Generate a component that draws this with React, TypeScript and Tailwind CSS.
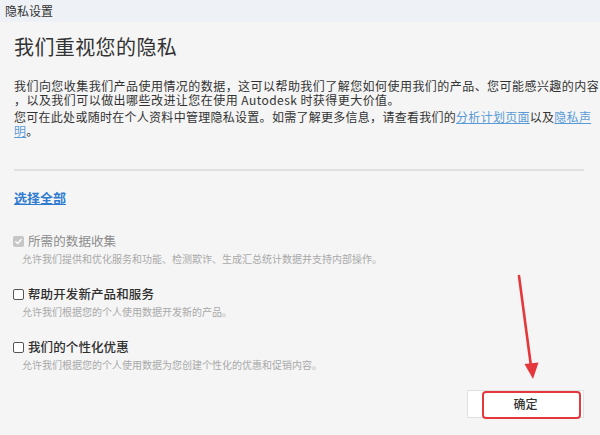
import React from "react";

function Box({ checked }: { checked?: boolean }) {
  if (checked) {
    return (
      <span className="w-[11px] h-[11px] rounded-[2px] bg-[#c6c6c6] flex items-center justify-center shrink-0">
        <svg width="9" height="9" viewBox="0 0 10 10">
          <path d="M2 5.2 L4.2 7.3 L8 2.8" fill="none" stroke="#fff" strokeWidth="1.6" strokeLinecap="round" strokeLinejoin="round" />
        </svg>
      </span>
    );
  }
  return <span className="w-[11px] h-[11px] rounded-[2px] border-[1.5px] border-[#555] bg-white shrink-0" />;
}

function Item({ label, desc, checked, mt }: { label: string; desc: string; checked?: boolean; mt: string }) {
  return (
    <div className={mt}>
      <div className="flex items-center gap-[4px] -ml-px h-[16px]">
        <Box checked={checked} />
        <span className={`text-[12.5px] leading-[16px] tracking-[0.1px] ${checked ? "text-[#8c8c8c]" : "text-[#2e2e2e] font-medium"}`}>{label}</span>
      </div>
      <div className="mt-[3px] pl-[8px] text-[10px] leading-[14px] text-[#a9a9a9] whitespace-nowrap">{desc}</div>
    </div>
  );
}

export default function App() {
  return (
    <div
      className="relative w-[600px] h-[435px] bg-[#f5f5f5] flex flex-col overflow-hidden text-[#333]"
      style={{ fontFamily: '"Noto Sans CJK SC", "Noto Sans", sans-serif' }}
    >
      <div className="h-[22px] bg-[#eef2f6] flex items-center pl-[5px] text-[12px] text-[#333] shrink-0">隐私设置</div>
      <div className="flex-1 flex flex-col px-[14px]">
        <h1 className="mt-[13px] text-[20px] leading-[24px] text-[#333] tracking-[0.4px]">我们重视您的隐私</h1>
        <div className="mt-[20px] text-[12px] leading-[14px] whitespace-nowrap text-[#333]">
          <div className="tracking-[0.45px]">我们向您收集我们产品使用情况的数据，这可以帮助我们了解您如何使用我们的产品、您可能感兴趣的内容</div>
          <div className="tracking-[0.45px]">，以及我们可以做出哪些改进让您在使用 Autodesk 时获得更大价值。</div>
        </div>
        <div className="mt-[3px] text-[12px] leading-[14px] tracking-[0.28px] whitespace-nowrap text-[#333]">
          <div>
            您可在此处或随时在个人资料中管理隐私设置。如需了解更多信息，请查看我们的<span className="text-[#5b9bd5] underline">分析计划页面</span>以及<span className="text-[#5b9bd5] underline">隐私声</span>
          </div>
          <div>
            <span className="text-[#5b9bd5] underline">明</span>。
          </div>
        </div>
        <div className="mt-[31px] mr-[2px] h-[2px] bg-[#e2e0e0]" />
        <div className="mt-[19px] text-[13px] leading-[16px] font-semibold text-[#2f7bd0] underline">选择全部</div>
        <Item
          mt="mt-[27px]"
          checked
          label="所需的数据收集"
          desc="允许我们提供和优化服务和功能、检测欺诈、生成汇总统计数据并支持内部操作。"
        />
        <Item mt="mt-[20px]" label="帮助开发新产品和服务" desc="允许我们根据您的个人使用数据开发新的产品。" />
        <Item mt="mt-[20px]" label="我们的个性化优惠" desc="允许我们根据您的个人使用数据为您创建个性化的优惠和促销内容。" />
        <div className="mt-auto mb-[17px] flex justify-end mr-[2px]">
          <div className="relative">
            <button className="w-[117px] h-[28px] bg-white border border-[#e0e0e0] text-[12px] font-medium text-[#333]">确定</button>
            <div className="absolute left-[15px] top-[1px] w-[99px] h-[28px] border-2 border-[#e5383d] rounded-[4px] pointer-events-none" />
          </div>
        </div>
      </div>
      <svg className="absolute left-0 top-0 pointer-events-none" width="600" height="435">
        <line x1="519" y1="276" x2="531.5" y2="370" stroke="#e5383d" strokeWidth="2.6" strokeLinecap="round" />
        <polygon points="533,379 524.5,364 538.5,362.5" fill="#e5383d" />
      </svg>
    </div>
  );
}
